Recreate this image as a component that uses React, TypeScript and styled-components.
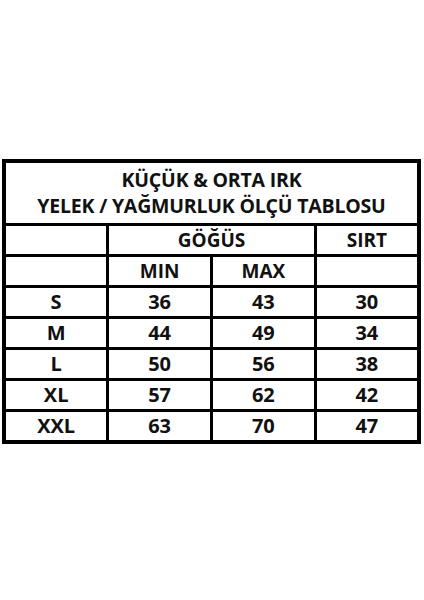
import styled, { createGlobalStyle } from 'styled-components'

const GlobalStyle = createGlobalStyle`
  html, body {
    margin: 0;
    padding: 0;
    background: #fff;
  }
  body {
    font-family: "Open Sans", "Liberation Sans", sans-serif;
    color: #111;
  }
`

const Page = styled.div`
  width: 424px;
  height: 600px;
  box-sizing: border-box;
  padding: 159px 3px 0 2px;
`

const Table = styled.table`
  width: 419px;
  border-collapse: collapse;
  border: 4px solid #000;
  table-layout: fixed;
`

const TitleCell = styled.td`
  height: 60px;
  padding: 0;
  text-align: center;
  font-weight: 700;
  font-size: 19.5px;
  line-height: 26px;
  letter-spacing: -0.2px;
  border-bottom: 3px solid #000;
`

const Cell = styled.td<{ $label?: boolean }>`
  height: 28px;
  padding: 0;
  text-align: center;
  vertical-align: middle;
  font-weight: 700;
  font-size: ${(p) => (p.$label ? '19px' : '20px')};
  line-height: 28px;
  border: 3px solid #000;
`

const rows = [
  ['S', '36', '43', '30'],
  ['M', '44', '49', '34'],
  ['L', '50', '56', '38'],
  ['XL', '57', '62', '42'],
  ['XXL', '63', '70', '47'],
]

export default function App() {
  return (
    <>
      <GlobalStyle />
      <Page>
        <Table>
          <colgroup>
            <col />
            <col />
            <col />
            <col />
          </colgroup>
          <tbody>
            <tr>
              <TitleCell colSpan={4}>
                KÜÇÜK &amp; ORTA IRK
                <br />
                YELEK / YAĞMURLUK ÖLÇÜ TABLOSU
              </TitleCell>
            </tr>
            <tr>
              <Cell />
              <Cell colSpan={2} $label>GÖĞÜS</Cell>
              <Cell $label>SIRT</Cell>
            </tr>
            <tr>
              <Cell />
              <Cell $label>MIN</Cell>
              <Cell $label>MAX</Cell>
              <Cell />
            </tr>
            {rows.map((r) => (
              <tr key={r[0]}>
                {r.map((v, i) => (
                  <Cell key={i}>{v}</Cell>
                ))}
              </tr>
            ))}
          </tbody>
        </Table>
      </Page>
    </>
  )
}
